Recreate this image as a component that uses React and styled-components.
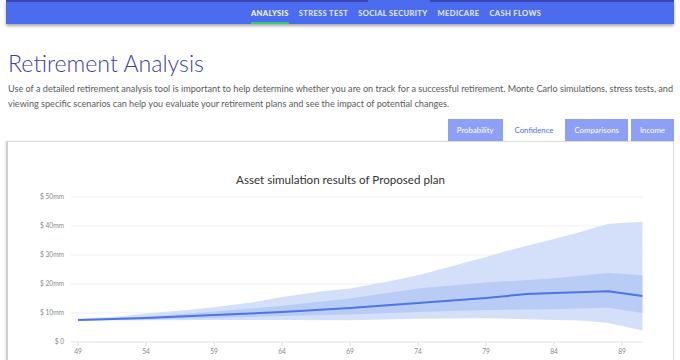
import React from "react";
import styled, { createGlobalStyle } from "styled-components";

const GlobalStyle = createGlobalStyle`
  html, body {
    margin: 0;
    padding: 0;
    background: #fff;
    overflow: hidden;
    font-family: Lato, "Open Sans", "Liberation Sans", sans-serif;
  }
  * { box-sizing: border-box; }
`;

const NAV_ITEMS = ["Analysis", "Stress Test", "Social Security", "Medicare", "Cash Flows"];
const TABS = ["Probability", "Confidence", "Comparisons", "Income"];

const ageX = (age) => 78 + (age - 49) * 13.6;
const valY = (v) => 342 - v * 2.9;

const outerUpper = [[49, 8], [52, 8.8], [54, 9.8], [57, 11], [59, 12], [62, 13.8], [64, 15.5], [67, 17.5], [69, 18.5], [72, 21], [74, 23], [76, 25.5], [79, 29.3], [81, 32], [84, 35.5], [86, 38], [88, 40.8], [90.5, 41.5]];
const outerLower = [[90.5, 4], [88, 6.5], [86, 7.4], [84, 7.6], [79, 8.2], [74, 8], [69, 7.5], [64, 7.6], [59, 7.6], [54, 7.5], [49, 7.3]];
const innerUpper = [[49, 7.8], [54, 8.8], [59, 10.5], [64, 12.5], [69, 15], [74, 18.5], [79, 20.5], [84, 22], [88, 23.8], [90.5, 23]];
const innerLower = [[90.5, 10], [88, 11.8], [84, 11.3], [79, 11], [74, 10.3], [69, 9.5], [64, 9], [59, 8.3], [54, 7.8], [49, 7.4]];
const median = [[49, 7.6], [54, 8.3], [59, 9.3], [64, 10.3], [69, 11.7], [74, 13.4], [79, 15.2], [82, 16.5], [84, 16.9], [88, 17.5], [90.5, 15.9]];

const toPoints = (pts) => pts.map(([a, v]) => `${ageX(a).toFixed(1)},${valY(v).toFixed(1)}`).join(" ");

const Y_TICKS = [50, 40, 30, 20, 10, 0];
const X_TICKS = [49, 54, 59, 64, 69, 74, 79, 84, 89];

const TopBar = styled.header`
  margin: 0 6px;
  height: 24px;
  background: #4b6cee;
  box-shadow: 0 2px 3px rgba(0, 0, 0, 0.35);
  display: flex;
  flex-direction: column;
`;

const TopStrip = styled.div`
  height: 2px;
  background: linear-gradient(
    to right,
    #3b45b6 0,
    #3b45b6 362px,
    #4b6cee 362px,
    #4b6cee 424px,
    #3b45b6 424px
  );
`;

const NavList = styled.nav`
  flex: 1;
  display: flex;
  align-items: stretch;
  gap: 10px;
  padding-left: 245px;
`;

const NavItem = styled.a`
  display: flex;
  align-items: center;
  padding-top: 1px;
  font-size: 7.6px;
  font-weight: 700;
  letter-spacing: 0.35px;
  text-transform: uppercase;
  color: ${(p) => (p.$active ? "#ffffff" : "#e8ecff")};
  border-bottom: 2px solid ${(p) => (p.$active ? "#34c983" : "transparent")};
`;

const Main = styled.main`
  padding: 0 6px;
`;

const Title = styled.h1`
  margin: 26px 0 0 2px;
  font-size: 23.2px;
  line-height: 27px;
  font-weight: 300;
  color: #3b3fb3;
`;

const Intro = styled.p`
  margin: 4px 0 0 2px;
  font-size: 9.1px;
  line-height: 15px;
  color: #5a5a5a;
  white-space: nowrap;
`;

const TabRow = styled.div`
  display: flex;
  justify-content: flex-end;
  gap: 3px;
  margin-top: 8px;
`;

const Tab = styled.button`
  height: 22px;
  padding: 0 9px;
  border: none;
  font-family: inherit;
  font-size: 7.8px;
  color: ${(p) => (p.$active ? "#4b6cee" : "#ffffff")};
  background: ${(p) => (p.$active ? "#ffffff" : "#8ea0f6")};
`;

const Panel = styled.section`
  border: 1px solid #dcdcdc;
  border-left: 2px solid #cfcfcf;
  border-bottom: none;
  background: #fff;
  box-shadow: -1px 0 2px rgba(0, 0, 0, 0.1);
  height: 222px;
`;

const ChartTitle = styled.h2`
  margin: 30px 0 0;
  text-align: center;
  font-size: 11.6px;
  line-height: 16px;
  font-weight: 400;
  color: #333;
`;

const ChartSvg = styled.svg`
  display: block;
  width: 666px;
  height: 172px;
  margin-top: 2px;
`;

const AxisText = styled.text`
  font-family: Lato, "Liberation Sans", sans-serif;
  font-size: 6.6px;
  fill: #8a8a8a;
`;

function Chart() {
  return (
    <ChartSvg viewBox="8 190 666 172">
      {Y_TICKS.map((v) => (
        <g key={v}>
          <line x1="71" x2="643" y1={valY(v)} y2={valY(v)} stroke={v === 0 ? "#e2e2e2" : "#efefef"} strokeWidth="1" />
          <AxisText x="64" y={valY(v) + 2.2} textAnchor="end">
            {v === 0 ? "$ 0" : `$ ${v}mm`}
          </AxisText>
        </g>
      ))}
      {X_TICKS.map((a) => (
        <g key={a}>
          <line x1={ageX(a)} x2={ageX(a)} y1="342" y2="346" stroke="#dedede" strokeWidth="1" />
          <AxisText x={ageX(a)} y="354" textAnchor="middle">
            {a}
          </AxisText>
        </g>
      ))}
      <polygon points={toPoints([...outerUpper, ...outerLower])} fill="#d4e0f9" />
      <polygon points={toPoints([...innerUpper, ...innerLower])} fill="#b9ccf5" />
      <polyline points={toPoints(median)} fill="none" stroke="#4d76e2" strokeWidth="2" strokeLinejoin="round" />
    </ChartSvg>
  );
}

export default function App() {
  return (
    <>
      <GlobalStyle />
      <TopBar>
        <TopStrip />
        <NavList>
          {NAV_ITEMS.map((item, i) => (
            <NavItem key={item} $active={i === 0}>
              {item}
            </NavItem>
          ))}
        </NavList>
      </TopBar>
      <Main>
        <Title>Retirement Analysis</Title>
        <Intro>
          Use of a detailed retirement analysis tool is important to help determine whether you are on track for a
          successful retirement. Monte Carlo simulations, stress tests, and
          <br />
          viewing specific scenarios can help you evaluate your retirement plans and see the impact of potential changes.
        </Intro>
        <TabRow>
          {TABS.map((t) => (
            <Tab key={t} $active={t === "Confidence"}>
              {t}
            </Tab>
          ))}
        </TabRow>
        <Panel>
          <ChartTitle>Asset simulation results of Proposed plan</ChartTitle>
          <Chart />
        </Panel>
      </Main>
    </>
  );
}
